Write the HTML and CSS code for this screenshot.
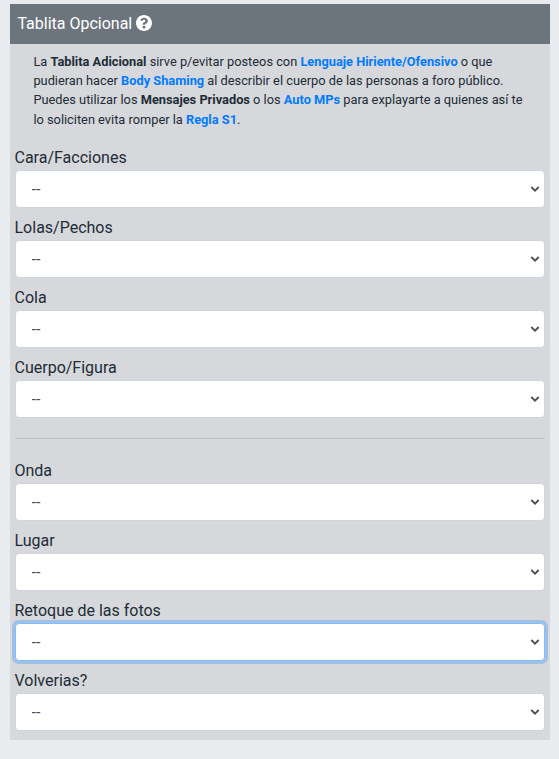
FILE: index.html
```html
<!DOCTYPE html>
<html lang="es">
<head>
    <meta charset="UTF-8" />
    <meta name="viewport" content="width=device-width, initial-scale=1.0" />
    <title>Tablita Opcional</title>
    <link rel="stylesheet" href="styles.css">
</head>
<body>
    <div class="card">
        <div class="card-header">
            Tablita Opcional
            <svg class="icono-ayuda" viewBox="8 8 496 496"><path fill="currentColor" d="M504 256c0 136.997-111.043 248-248 248S8 392.997 8 256C8 119.083 119.043 8 256 8s248 111.083 248 248zM262.655 90c-54.497 0-89.255 22.957-116.549 63.758-3.536 5.286-2.353 12.415 2.715 16.258l34.699 26.31c5.205 3.947 12.621 3.008 16.665-2.122 17.864-22.658 30.113-35.797 57.303-35.797 20.429 0 45.698 13.148 45.698 32.958 0 14.976-12.363 22.667-32.534 33.976C247.128 238.528 216 254.941 216 296v4c0 6.627 5.373 12 12 12h56c6.627 0 12-5.373 12-12v-1.333c0-28.462 83.186-29.647 83.186-106.667 0-58.002-60.165-102-116.531-102zM256 338c-25.365 0-46 20.635-46 46 0 25.364 20.635 46 46 46s46-20.636 46-46c0-25.365-20.635-46-46-46z"/></svg>
        </div>
        <div class="card-body">
            <p class="aviso">
                La <b>Tablita Adicional</b> sirve p/evitar posteos con <a href="#">Lenguaje Hiriente/Ofensivo</a> o que<br>
                pudieran hacer <a href="#">Body Shaming</a> al describir el cuerpo de las personas a foro público.<br>
                Puedes utilizar los <b>Mensajes Privados</b> o los <a href="#">Auto MPs</a> para explayarte a quienes así te<br>
                lo soliciten evita romper la <a href="#">Regla S1</a>.
            </p>

            <label for="cara">Cara/Facciones</label>
            <select id="cara" class="form-control"><option>--</option></select>

            <label for="lolas">Lolas/Pechos</label>
            <select id="lolas" class="form-control"><option>--</option></select>

            <label for="cola">Cola</label>
            <select id="cola" class="form-control"><option>--</option></select>

            <label for="cuerpo">Cuerpo/Figura</label>
            <select id="cuerpo" class="form-control"><option>--</option></select>

            <hr>

            <label for="onda">Onda</label>
            <select id="onda" class="form-control"><option>--</option></select>

            <label for="lugar">Lugar</label>
            <select id="lugar" class="form-control"><option>--</option></select>

            <label for="retoque">Retoque de las fotos</label>
            <select id="retoque" class="form-control activo"><option>--</option></select>

            <label for="volverias">Volverias?</label>
            <select id="volverias" class="form-control"><option>--</option></select>
        </div>
    </div>
</body>
</html>
```
FILE: styles.css
```css
* {
    box-sizing: border-box;
}
body {
    margin: 0;
    padding: 4px 9px 0 10px;
    background: #e8ecef;
    font-family: Roboto, sans-serif;
    font-size: 16px;
    line-height: 24px;
    color: #212c37;
}
.card {
    height: 736px;
    background: #d6d8db;
}
.card-header {
    height: 40px;
    padding: 8px 7px 0 7.4px;
    background: #6c757d;
    color: #fff;
}
.icono-ayuda {
    width: 16px;
    height: 16px;
    vertical-align: -2px;
}
.card-body {
    padding: 8px 5px 0;
}
.aviso {
    margin: 0 0 17px;
    padding-left: 18.4px;
    font-size: 12.8px;
    line-height: 19.2px;
    white-space: nowrap;
}
.aviso b,
.aviso a {
    font-weight: 700;
}
.aviso a {
    color: #007bff;
    text-decoration: none;
}
label {
    display: block;
    margin-left: -0.5px;
}
.form-control {
    display: block;
    width: 100%;
    height: 38px;
    margin-bottom: 8px;
    padding: 7px 15.6px 5px;
    border: 1px solid #ced4da;
    border-radius: 4px;
    background: #fff url("data:image/svg+xml,%3Csvg xmlns='http://www.w3.org/2000/svg' width='10' height='6'%3E%3Cpath d='M1.3 1 5 4.7 8.7 1' fill='none' stroke='%23495057' stroke-width='1.8'/%3E%3C/svg%3E") no-repeat right 4px top 15px;
    color: #495057;
    font: inherit;
    appearance: none;
}
.form-control.activo {
    border-color: #80bdff;
    box-shadow: 0 0 0 3px rgba(0, 123, 255, 0.25);
}
hr {
    height: 1px;
    margin: 20px 0;
    border: 0;
    background: #bfc1c5;
}
```
